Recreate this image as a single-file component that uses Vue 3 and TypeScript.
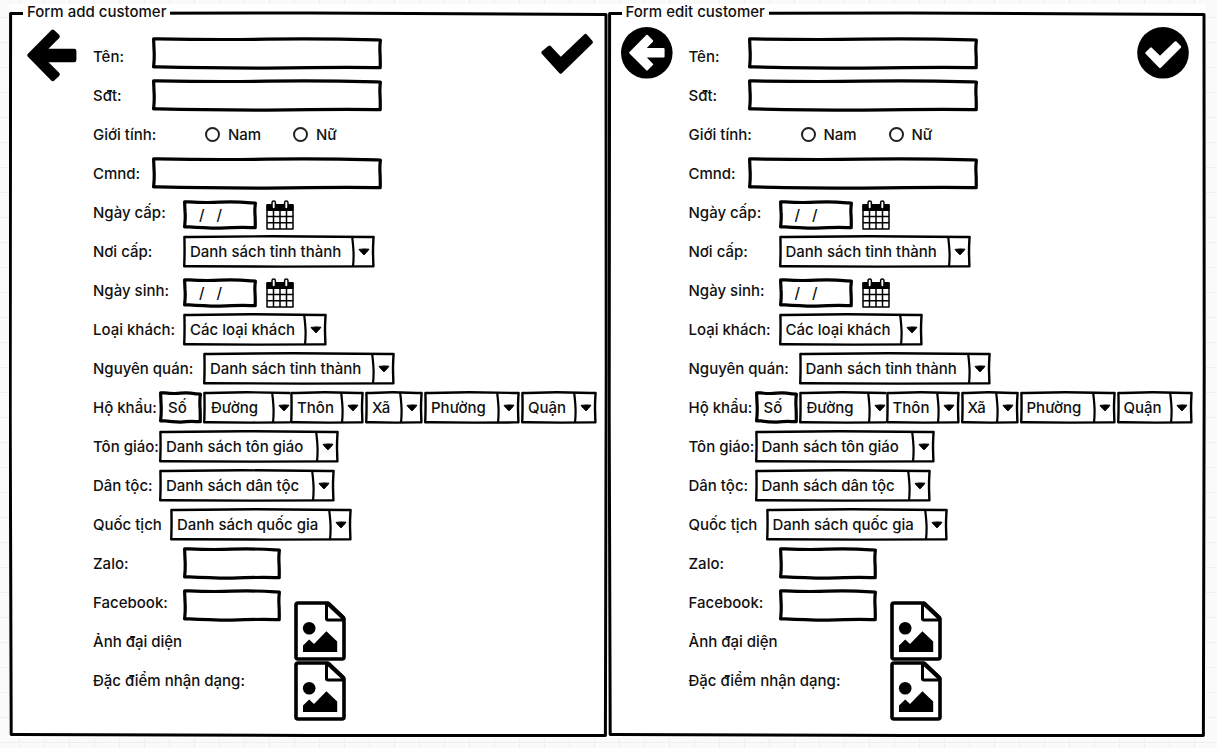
<script setup lang="ts">
interface Choice { text: string; size: string }
interface Field {
  id: string
  label: string
  kind: 'text' | 'gender' | 'date' | 'choice' | 'address' | 'none'
  indent: string
  size?: string
  choices?: Choice[]
}
interface FormPanel { id: string; title: string; round: boolean }

const panels: FormPanel[] = [
  { id: 'add', title: 'Form add customer', round: false },
  { id: 'edit', title: 'Form edit customer', round: true },
]

const fields: Field[] = [
  { id: 'name', label: 'Tên:', kind: 'text', indent: 'narrow', size: 'long' },
  { id: 'phone', label: 'Sđt:', kind: 'text', indent: 'narrow', size: 'long' },
  { id: 'gender', label: 'Giới tính:', kind: 'gender', indent: 'radio' },
  { id: 'idcard', label: 'Cmnd:', kind: 'text', indent: 'narrow', size: 'long' },
  { id: 'issued', label: 'Ngày cấp:', kind: 'date', indent: 'wide' },
  { id: 'place', label: 'Nơi cấp:', kind: 'choice', indent: 'wide', choices: [{ text: 'Danh sách tỉnh thành', size: 's192' }] },
  { id: 'birth', label: 'Ngày sinh:', kind: 'date', indent: 'wide' },
  { id: 'type', label: 'Loại khách:', kind: 'choice', indent: 'wide', choices: [{ text: 'Các loại khách', size: 's144' }] },
  { id: 'origin', label: 'Nguyên quán:', kind: 'choice', indent: 'widest', choices: [{ text: 'Danh sách tỉnh thành', size: 's192' }] },
  {
    id: 'address', label: 'Hộ khẩu:', kind: 'address', indent: 'medium', choices: [
      { text: 'Đường', size: 's92' },
      { text: 'Thôn', size: 's74' },
      { text: 'Xã', size: 's58' },
      { text: 'Phường', size: 's96' },
      { text: 'Quận', size: 's76' },
    ],
  },
  { id: 'religion', label: 'Tôn giáo:', kind: 'choice', indent: 'medium', choices: [{ text: 'Danh sách tôn giáo', size: 's180' }] },
  { id: 'ethnic', label: 'Dân tộc:', kind: 'choice', indent: 'medium', choices: [{ text: 'Danh sách dân tộc', size: 's176' }] },
  { id: 'nation', label: 'Quốc tịch', kind: 'choice', indent: 'nation', choices: [{ text: 'Danh sách quốc gia', size: 's182' }] },
  { id: 'zalo', label: 'Zalo:', kind: 'text', indent: 'wide', size: 'short' },
]
</script>

<template>
  <main class="board">
    <fieldset v-for="p in panels" :key="p.id" class="panel" :class="p.id">
      <legend>{{ p.title }}</legend>
      <div class="content">
        <button type="button" class="icon-btn back" aria-label="Back">
          <svg v-if="!p.round" viewBox="0 0 52 52">
            <path d="M4.5 28.3 L27.8 4.8 L32.6 9.4 L18.2 24 H49.2 V33 H18.2 L32.6 47.4 L27.8 52 Z" stroke="#000" stroke-width="4.4" stroke-linejoin="round" />
          </svg>
          <svg v-else viewBox="0 0 52 52">
            <circle cx="25.8" cy="25.8" r="25.8" />
            <path d="M9.2 25.7 L26 8.8 L31.2 14 L23.4 22 H42.6 V29.4 H23.4 L31.2 37.4 L26 42.6 Z" fill="#fff" stroke="#fff" stroke-width="2" stroke-linejoin="round" />
          </svg>
        </button>

        <div class="fields">
          <div v-for="f in fields" :key="f.id" class="row" :class="['row-' + f.id, { tight: f.kind === 'address' }]">
            <span v-if="f.kind === 'gender'" :id="p.id + '-gender'" class="label" :class="f.indent">{{ f.label }}</span>
            <label v-else class="label" :class="f.indent" :for="p.id + '-' + f.id + (f.kind === 'choice' ? '-0' : '')">{{ f.label }}</label>

            <input v-if="f.kind === 'text'" :id="p.id + '-' + f.id" type="text" class="box" :class="f.size">

            <div v-if="f.kind === 'gender'" class="radios" role="radiogroup" :aria-labelledby="p.id + '-gender'">
              <label class="radio"><input type="radio" :name="p.id + '-sex'" value="nam">Nam</label>
              <label class="radio"><input type="radio" :name="p.id + '-sex'" value="nu">Nữ</label>
            </div>

            <template v-if="f.kind === 'date'">
              <input :id="p.id + '-' + f.id" type="text" class="box date" value="/   /">
              <button type="button" class="icon-btn calendar" aria-label="Open calendar">
                <svg viewBox="0 0 28 30">
                  <path d="M1 5 H27 V29 H1 Z M1 16.5 H27 M1 22.7 H27 M7.5 10 V29 M14 10 V29 M20.5 10 V29" fill="none" stroke="#000" stroke-width="1.5" stroke-linejoin="round" />
                  <path d="M0.5 5 Q0.5 4 1.5 4 H26.5 Q27.5 4 27.5 5 V11 H0.5 Z" />
                  <rect x="6" y="1" width="3.4" height="8" rx="1.7" fill="#fff" stroke="#000" stroke-width="1.5" />
                  <rect x="18.6" y="1" width="3.4" height="8" rx="1.7" fill="#fff" stroke="#000" stroke-width="1.5" />
                </svg>
              </button>
            </template>

            <input v-if="f.kind === 'address'" :id="p.id + '-' + f.id" type="text" class="box number" value="Số">
            <select v-for="(c, i) in f.choices" :id="p.id + '-' + f.id + '-' + i" :key="i" class="pick" :class="c.size" :aria-label="f.kind === 'address' ? c.text : undefined">
              <option>{{ c.text }}</option>
            </select>
          </div>

          <div class="uploads">
            <div class="upload-labels">
              <div class="row row-facebook">
                <label class="label wide" :for="p.id + '-facebook'">Facebook:</label>
                <input :id="p.id + '-facebook'" type="text" class="box short">
              </div>
              <div class="row"><label :for="p.id + '-avatar'">Ảnh đại diện</label></div>
              <div class="row"><label :for="p.id + '-marks'">Đặc điểm nhận dạng:</label></div>
            </div>
            <div class="upload-icons">
              <button v-for="n in ['avatar', 'marks']" :id="p.id + '-' + n" :key="n" type="button" class="icon-btn picture">
                <svg viewBox="0 0 52 60">
                  <path d="M4 2 H34 L50 17.5 V56 Q50 58 48 58 H4 Q2 58 2 56 V4 Q2 2 4 2 Z" fill="#fff" stroke="#000" stroke-width="3.6" stroke-linejoin="round" />
                  <path d="M32.5 2.5 V17.5 Q32.5 19 34 19 H49.5" fill="none" stroke="#000" stroke-width="3" />
                  <path d="M34 2.5 L49.5 17" stroke="#000" stroke-width="4.4" />
                  <circle cx="15.2" cy="27.3" r="6.3" />
                  <path d="M9 51 V44.6 L15.2 38.6 L20 43 L32.4 30.2 L43.2 40.6 V51 Z" />
                </svg>
              </button>
            </div>
          </div>
        </div>

        <button type="button" class="icon-btn confirm" aria-label="Save">
          <svg v-if="!p.round" viewBox="0 0 52 52">
            <path d="M2 25.6 L8.4 20.2 L19.7 32.2 L44.6 8.6 L50.2 15.2 L19.7 45 Z" stroke="#000" stroke-width="3.4" stroke-linejoin="round" />
          </svg>
          <svg v-else viewBox="0 0 52 52">
            <circle cx="26" cy="25.8" r="25.8" />
            <path d="M9.4 26 L14 21.6 L23 30.4 L38.6 15.4 L43 19.8 L23 40 Z" fill="#fff" stroke="#fff" stroke-width="2.4" stroke-linejoin="round" />
          </svg>
        </button>
      </div>
    </fieldset>
  </main>
</template>

<style>
html {
  background-color: #fafafa;
  background-image:
    linear-gradient(to right, #efefef 1px, transparent 1px),
    linear-gradient(to bottom, #efefef 1px, transparent 1px);
  background-size: 25px 25px;
  background-position: 19px 17px;
}
</style>

<style scoped>
.board {
  display: flex;
  margin: 4px 11px 10px 9px;
  background: #fff;
  color: #111;
  font: 500 15px/20px Inter, "Noto Sans", sans-serif;
}
.panel {
  flex: 1 1 0;
  min-width: 0;
  margin: 0;
  padding: 0;
  border: 6px solid transparent;
  border-image: url("data:image/svg+xml,%3Csvg xmlns='http://www.w3.org/2000/svg' width='598' height='724' viewBox='0 0 598 724'%3E%3Cpath d='M1.6 3.4 L300 3 L596 4.4 L596.2 360 L595.4 721.6 L300 721.4 L2.2 720.6 L1.2 400 Z' fill='none' stroke='black' stroke-width='3' stroke-linejoin='round'/%3E%3C/svg%3E") 6 stretch;
}
legend {
  margin-left: 8px;
  padding: 0 4px 2px;
  line-height: 16px;
  background: #fff;
}
.content {
  display: grid;
  grid-template-columns: 52px minmax(0, 1fr) 52px;
  column-gap: 16px;
  align-items: start;
  padding: 5px 9px 11px 10px;
}
.edit .content { padding-left: 7px; padding-right: 11px; }
.back { grid-area: 1 / 1; }
.fields { grid-area: 1 / 2 / 2 / 4; padding-top: 10px; }
.confirm { grid-area: 1 / 3; }

.icon-btn {
  display: block;
  width: 52px;
  height: 52px;
  padding: 0;
  border: 0;
  background: none;
}
.icon-btn svg { display: block; width: 100%; height: 100%; overflow: visible; }
.calendar { width: 28px; height: 30px; margin: 4px 0 0 9px; }
.picture { height: 60px; }

.row { display: flex; align-items: center; height: 39px; white-space: nowrap; }
.row.tight { gap: 1px; }
.row-name { align-items: start; }
.row-name .label { line-height: 39px; }
.row-facebook { align-items: end; }
.row-facebook .label { line-height: 39px; }

.label { flex: none; }
.narrow { width: 59px; }
.medium { width: 66px; }
.tight .medium { width: 65px; }
.nation { width: 77px; }
.wide { width: 90px; }
.widest { width: 110px; }
.radio { display: flex; align-items: center; width: 88px; }
.label.radio { width: 112px; }
.radios { display: flex; }
.radio input {
  appearance: none;
  width: 15px;
  height: 15px;
  margin: 0 8px 0 0;
  border: 2px solid #222;
  border-radius: 50%;
  background: #fff;
}

.box, .pick {
  flex: none;
  box-sizing: border-box;
  height: 33px;
  margin: 0;
  border: 6px solid transparent;
  border-radius: 0;
  color: inherit;
  font: inherit;
  outline: 0;
}
.box {
  padding: 0;
  background: none;
  border-image: url("data:image/svg+xml,%3Csvg xmlns='http://www.w3.org/2000/svg' width='228' height='33' viewBox='0 0 228 33'%3E%3Cpath d='M1.6 1.8 Q60 3 114 2.2 T226.4 3 Q225.6 10 226 16 T226.2 30.6 Q180 30 114 31.2 Q50 31 1.6 29.8 Q2.6 20 2 12 Z' fill='none' stroke='black' stroke-width='3.2' stroke-linejoin='round'/%3E%3C/svg%3E") 6 stretch;
}
.long { width: 230px; }
.short { width: 98px; }
.date { width: 74px; height: 30px; margin-top: 4px; padding-left: 10px; white-space: pre; }
.number { width: 43px; padding-left: 3px; }

.pick {
  appearance: none;
  padding: 0 16px 0 1px;
  background:
    url("data:image/svg+xml,%3Csvg xmlns='http://www.w3.org/2000/svg' width='12' height='8' viewBox='0 0 12 8'%3E%3Cpath d='M1 1.4 Q6 .6 11 1.2 Q8.6 4.6 6 6.8 Q3.4 4.6 1 1.4Z' stroke='black' stroke-linejoin='round'/%3E%3C/svg%3E") right 5px center / 12px 8px no-repeat border-box,
    url("data:image/svg+xml,%3Csvg xmlns='http://www.w3.org/2000/svg' width='4' height='30' viewBox='0 0 4 30'%3E%3Cpath d='M1.2 0 Q2.6 12 2.6 18 T2 30' fill='none' stroke='black' stroke-width='2.2'/%3E%3C/svg%3E") right 20px center / 4px 30px no-repeat border-box,
    #fff;
  border-image: url("data:image/svg+xml,%3Csvg xmlns='http://www.w3.org/2000/svg' width='192' height='33' viewBox='0 0 192 33'%3E%3Cpath d='M1.4 2 L90 1.2 L190.6 2 Q190 10 190 18 L190.4 31.4 L100 31.6 L1.2 31.2 Q1.8 18 1.4 2Z' fill='none' stroke='black' stroke-width='2.4' stroke-linejoin='round'/%3E%3C/svg%3E") 6 stretch;
}
.s192 { width: 192px; }
.s182 { width: 182px; }
.s180 { width: 180px; }
.s176 { width: 176px; }
.s144 { width: 144px; }
.s96 { width: 96px; }
.s92 { width: 92px; margin-right: -6px; padding-left: 2px; }
.s76 { width: 76px; }
.s74 { width: 74px; }
.s58 { width: 58px; }

.uploads { display: flex; align-items: start; }
.upload-labels { width: 201px; }
.upload-icons { padding-top: 18px; }
</style>
